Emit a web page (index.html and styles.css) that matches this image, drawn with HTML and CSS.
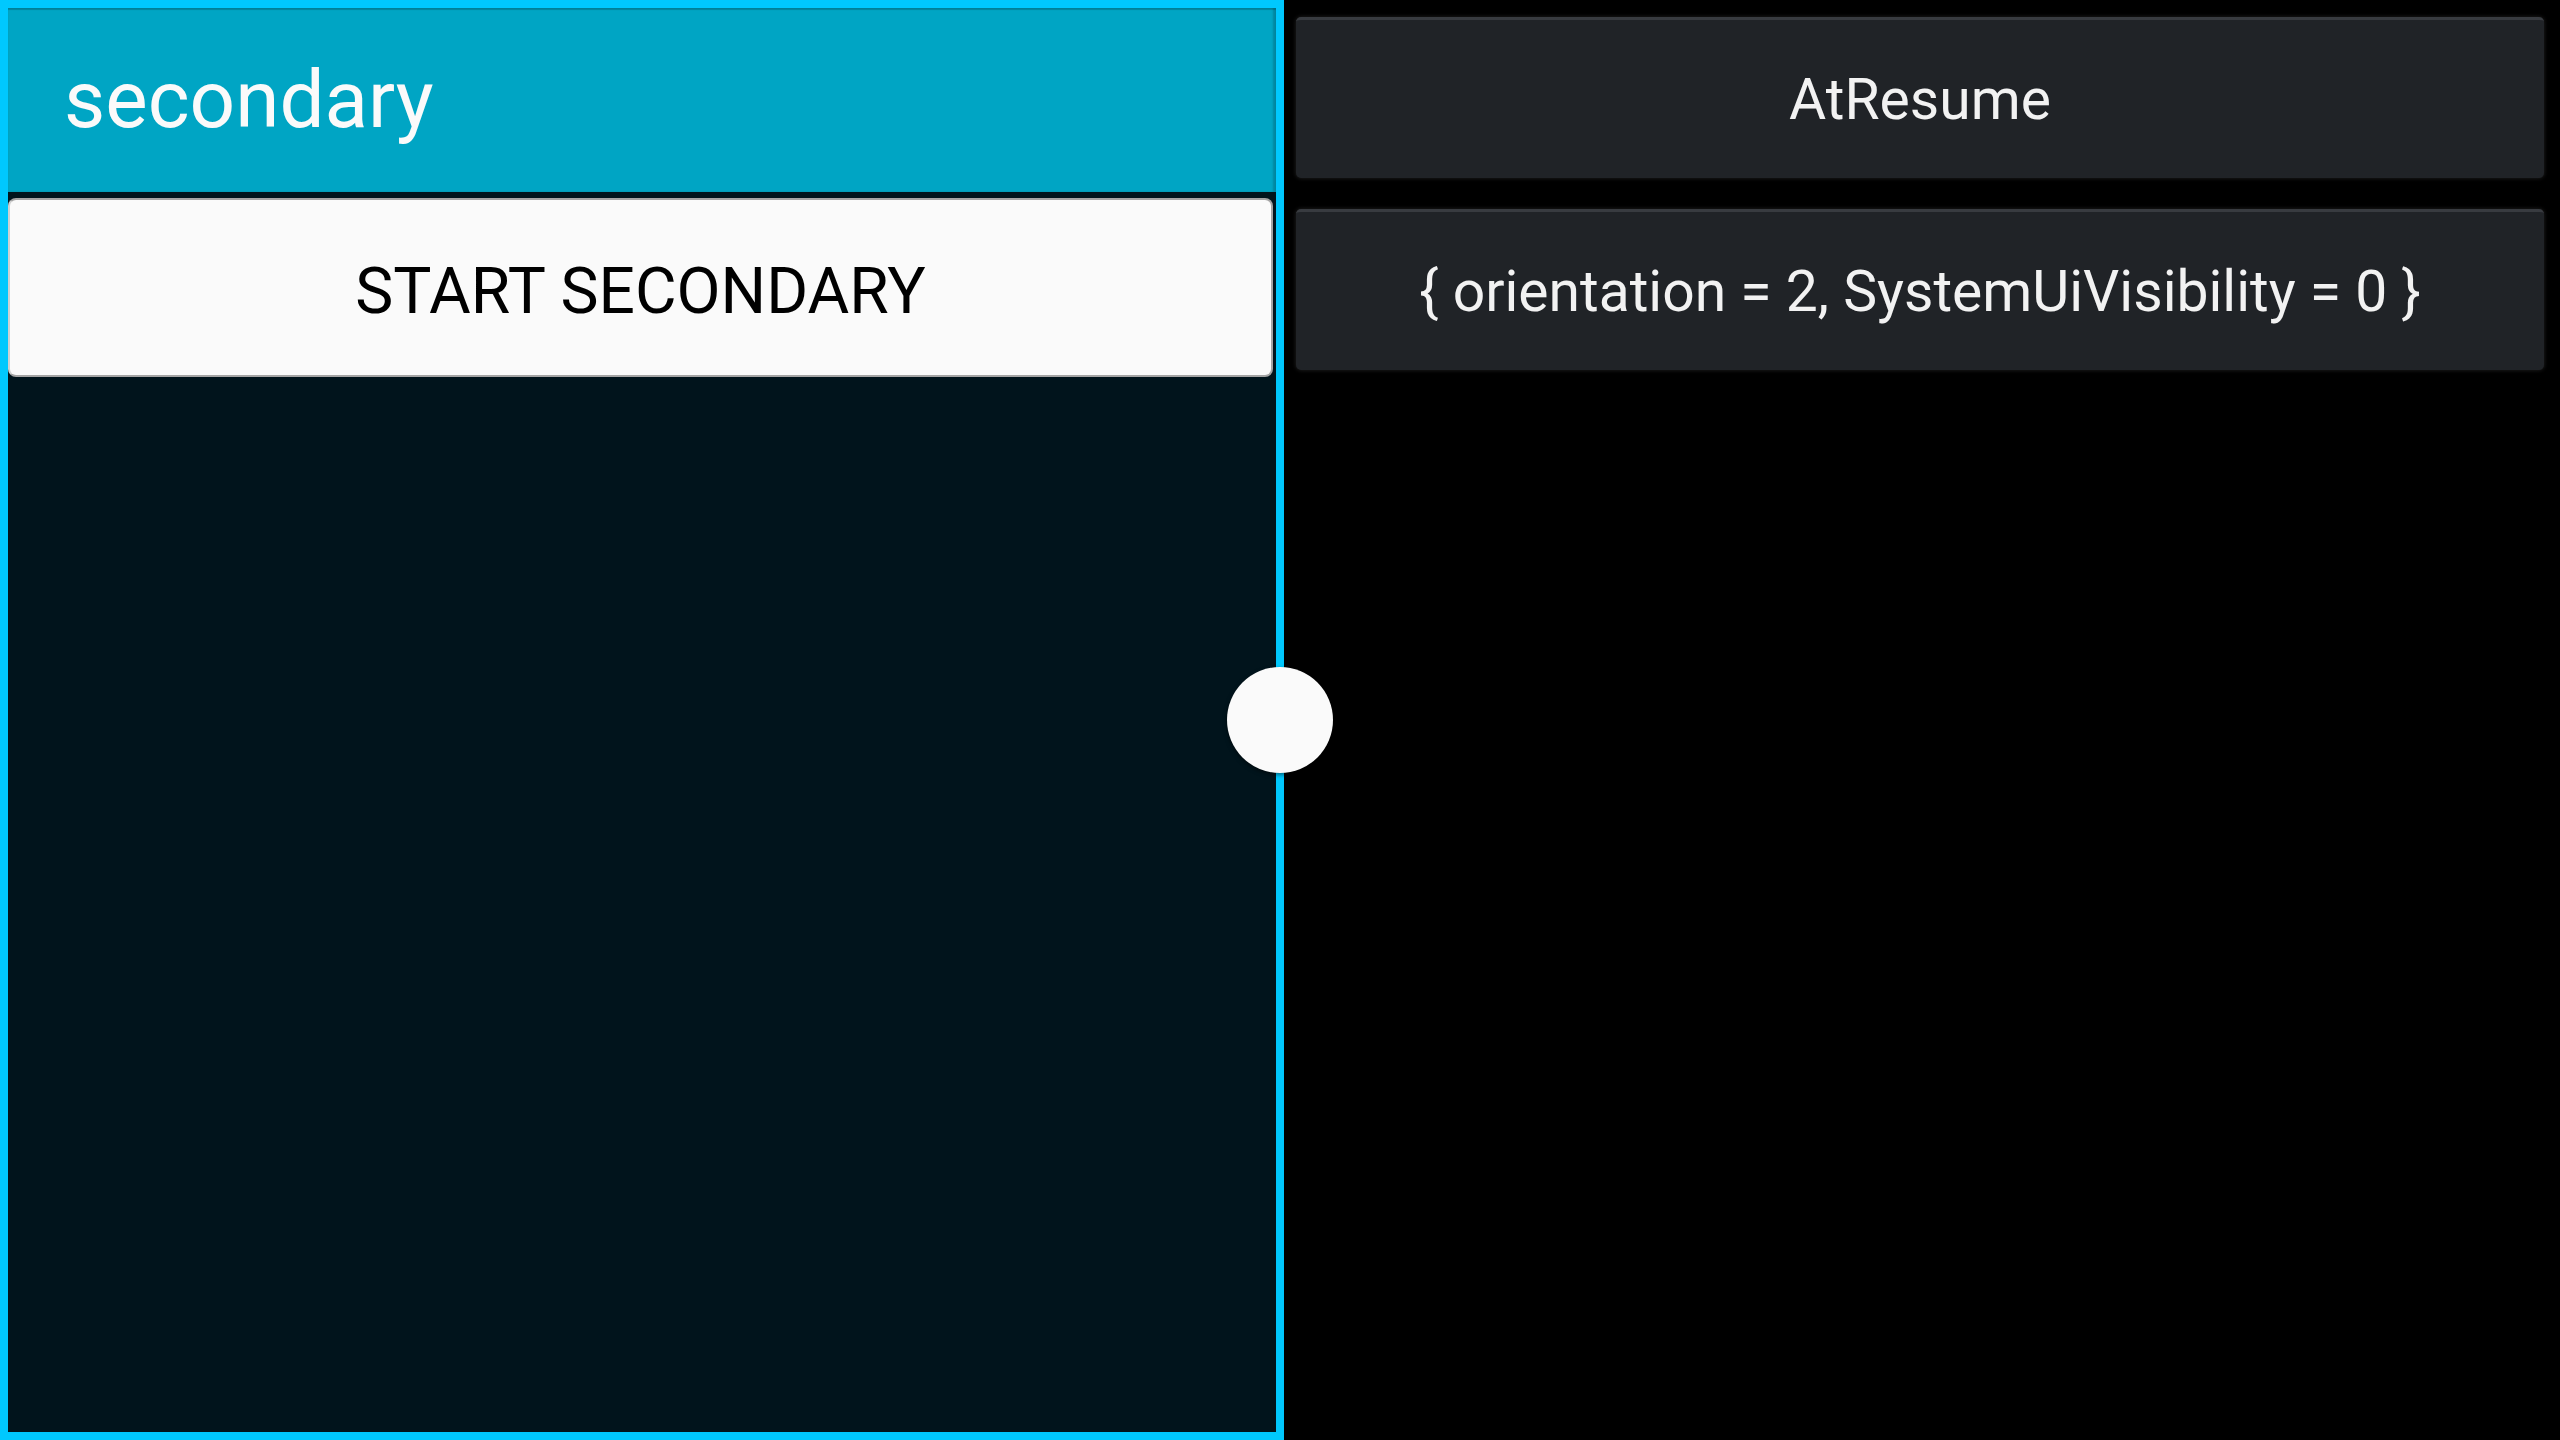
FILE: index.html
```html
<!DOCTYPE html>
<html>
<head>
<meta charset="utf-8">
<link rel="stylesheet" href="styles.css">
</head>
<body>
<div class="screen">
  <div class="pane-left">
    <div class="appbar">secondary</div>
    <div class="btn">START SECONDARY</div>
  </div>
  <div class="pane-right">
    <div class="card">AtResume</div>
    <div class="card">{ orientation = 2, SystemUiVisibility = 0 }</div>
  </div>
  <div class="handle"></div>
</div>
</body>
</html>
```

FILE: styles.css
```css
html, body {
  margin: 0;
  padding: 0;
  background: #000;
}
.screen {
  position: relative;
  width: 2560px;
  height: 1440px;
  display: flex;
  font-family: Roboto, "Noto Sans", sans-serif;
  overflow: hidden;
}
.pane-left {
  box-sizing: border-box;
  width: 1284px;
  height: 1440px;
  border: 8px solid #00c8fe;
  background: #01141c;
  display: flex;
  flex-direction: column;
}
.appbar {
  height: 184px;
  background: #00a5c4;
  color: #fafafa;
  font-size: 80px;
  display: flex;
  align-items: center;
  padding-left: 56px;
  box-shadow: inset 0 2px 1px rgba(0,0,0,0.18), inset -3px 0 2px rgba(0,0,0,0.18);
}
.btn {
  margin: 6px 3px 0 0;
  height: 179px;
  box-sizing: border-box;
  padding-top: 8px;
  background: #fafafa;
  border: 2px solid #a4a4a4;
  border-left-color: #d0d0d0;
  border-radius: 8px;
  color: #000;
  font-size: 64px;
  font-weight: 400;
  display: flex;
  align-items: center;
  justify-content: center;
}
.pane-right {
  flex: 1;
  display: flex;
  flex-direction: column;
  gap: 31px;
  padding: 17px 16px 0 12px;
}
.card {
  height: 161px;
  box-sizing: border-box;
  background: #202327;
  border-top: 3px solid #383b40;
  border-radius: 5px;
  box-shadow: 0 0 4px rgba(60,60,60,0.6);
  color: #f2f2f2;
  font-size: 57px;
  display: flex;
  align-items: center;
  justify-content: center;
}
.handle {
  position: absolute;
  left: 1227px;
  top: 667px;
  width: 106px;
  height: 106px;
  border-radius: 50%;
  background: #fafafa;
  box-shadow: 0 2px 4px rgba(0,0,0,0.5);
}
```
